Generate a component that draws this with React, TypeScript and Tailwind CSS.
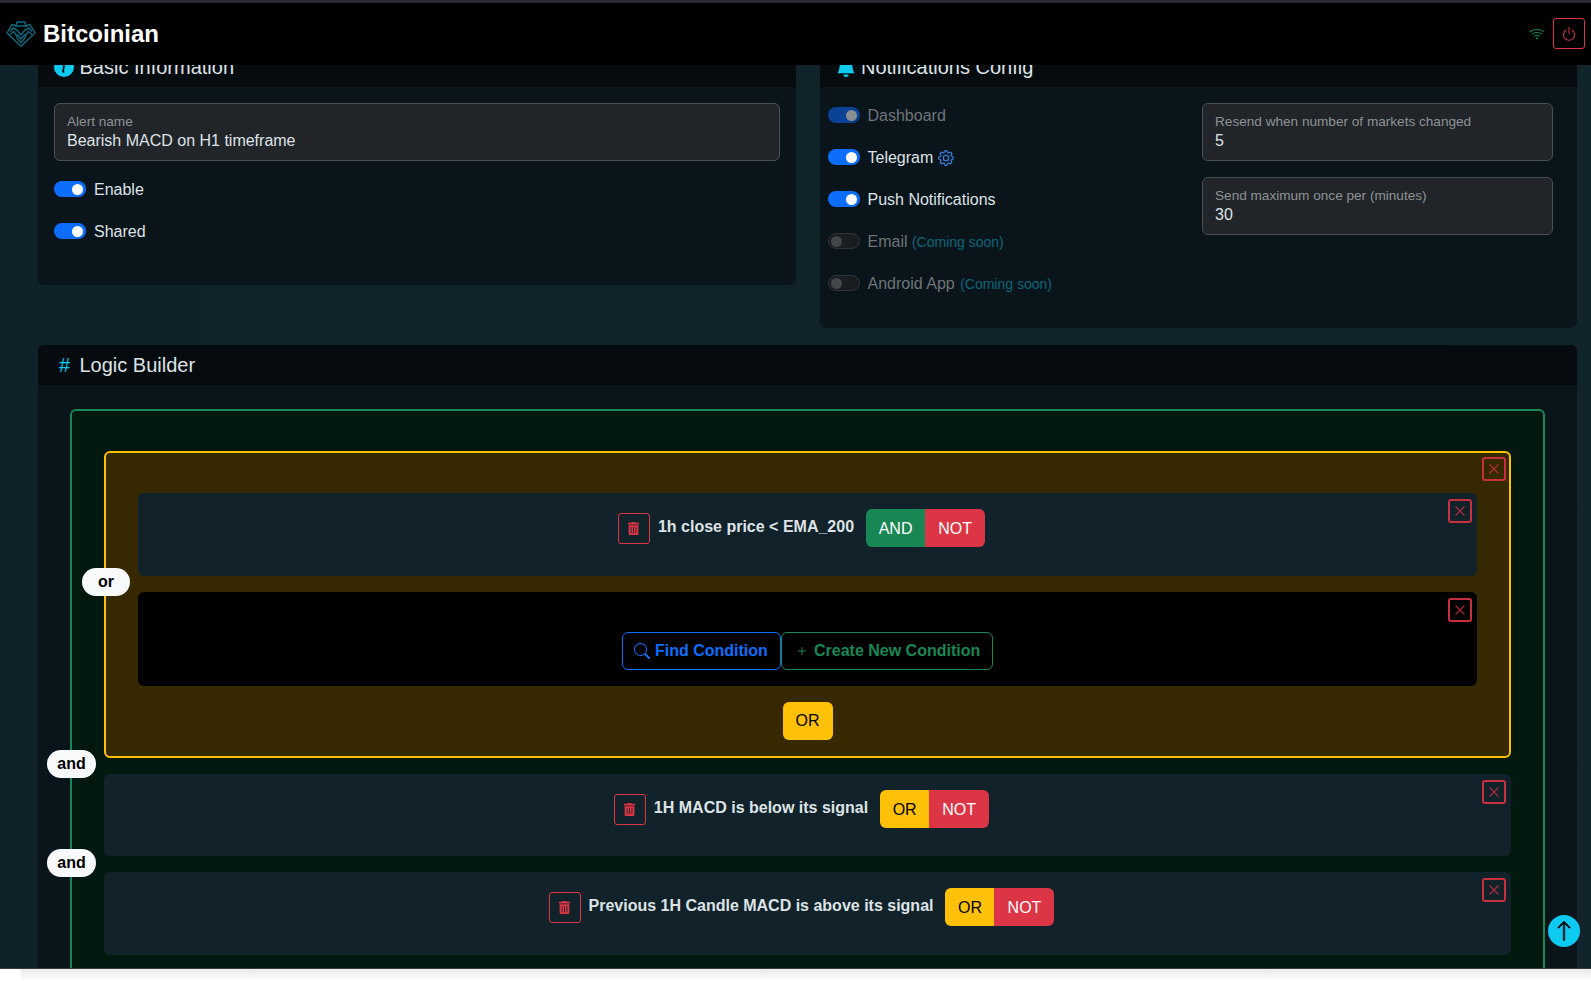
import type { ReactNode } from 'react'
import { BsArrowUp, BsBellFill, BsGear, BsInfoCircleFill, BsPlus, BsPower, BsSearch, BsWifi, BsXLg } from 'react-icons/bs'
import { FaTrashAlt } from 'react-icons/fa'

function Logo() {
    return (
        <svg width="30" height="26" viewBox="0 0 30 26" fill="none" stroke="#0c6c82" strokeWidth="1.4" strokeLinejoin="round" strokeLinecap="round">
            <path d="M6 3.5 L1 12 L15 25.3 L29 12 L24 3.5 L20 5 L19 1 H11 L10 5 Z" />
            <path d="M10 5 H20" />
            <path d="M4.5 10 L7 7 L11 9 L15 14 L19 9 L23 7 L25.5 10" />
            <path d="M4.5 13 L8 10.5 L12.5 19 L15 21.5 L17.5 19 L22 10.5 L25.5 13" />
            <path d="M11 13.5 L15 18 L19 13.5" />
        </svg>
    )
}

function Switch({ dim = false, off = false }: { dim?: boolean; off?: boolean }) {
    if (off) {
        return (
            <span className="-mt-px flex h-4 w-8 shrink-0 items-center rounded-full border border-[#2f353a] bg-[#191d21] pl-[2px]">
                <span className="h-[11px] w-[11px] rounded-full bg-[#43474b]" />
            </span>
        )
    }
    return (
        <span className={`-mt-px flex h-4 w-8 shrink-0 items-center justify-end rounded-full pr-[3px] ${dim ? 'bg-[#0a4295]' : 'bg-[#0d6efd]'}`}>
            <span className={`h-[11px] w-[11px] rounded-full ${dim ? 'bg-[#8a8f94]' : 'bg-white'}`} />
        </span>
    )
}

function SwitchRow({ children, ...rest }: { children: ReactNode; dim?: boolean; off?: boolean }) {
    return (
        <div className="flex h-6 items-center gap-2 pt-px">
            <Switch {...rest} />
            {children}
        </div>
    )
}

function Field({ label, value }: { label: string; value: string }) {
    return (
        <div className="h-[58px] rounded-md border border-[#495057] bg-[#212529] px-3 pt-[9px]">
            <div className="text-[13.6px] leading-[18px] text-[#8d9296]">{label}</div>
            <div className="text-base leading-5 text-[#dee2e6]">{value}</div>
        </div>
    )
}

function CardHead({ icon, title }: { icon: ReactNode; title: string }) {
    return (
        <div className="flex h-10 items-center rounded-t-md bg-[#050b0e] pl-4 text-xl text-[#dee2e6]">
            <span className="flex w-[25.5px] items-center text-[#0dcaf0]">{icon}</span>
            {title}
        </div>
    )
}

function CloseBtn({ className }: { className: string }) {
    return (
        <span className={`absolute flex h-6 w-6 items-center justify-center rounded-[3px] border-2 border-[#c9303f] text-[#c9303f] ${className}`}>
            <BsXLg size={12} strokeWidth={0.5} />
        </span>
    )
}

function Pill({ label, className }: { label: string; className: string }) {
    return (
        <span className={`absolute flex h-7 items-center justify-center rounded-full bg-[#f8f9fa] text-base font-bold text-black ${className}`}>
            {label}
        </span>
    )
}

function ConditionRow({ text, first, className, close }: { text: string; first: 'AND' | 'OR'; className: string; close: string }) {
    return (
        <div className={`relative flex items-start justify-center rounded-md bg-[#11222a] pr-3 pt-4 ${className}`}>
            <CloseBtn className={close} />
            <span className="mt-1 flex h-[31px] w-8 items-center justify-center rounded-[3px] border border-[#dc3545] pb-px text-[#dc3545]">
                <FaTrashAlt size={13} />
            </span>
            <span className="ml-2 mt-2 text-base font-bold leading-5 text-[#dee2e6]">{text}</span>
            <div className="ml-3 flex h-[38px] overflow-hidden rounded-md text-base">
                {first === 'AND' ? (
                    <span className="flex w-[59px] items-center justify-center bg-[#198754] pt-px text-white">AND</span>
                ) : (
                    <span className="flex w-[49px] items-center justify-center bg-[#ffc107] pt-px text-black">OR</span>
                )}
                <span className="flex w-[60px] items-center justify-center bg-[#dc3545] pt-px text-white">NOT</span>
            </div>
        </div>
    )
}

export default function App() {
    return (
        <div className="h-[981px] overflow-hidden bg-white font-['Liberation_Sans',Arial,sans-serif]">
            <div className="relative h-[969px] overflow-hidden border-b border-[#3a3a3a] bg-[linear-gradient(90deg,#0f2229,#11232b)]">
                <header className="absolute inset-x-0 top-0 z-10 flex h-[65px] items-center border-t-[3px] border-[#2a2b30] bg-black pb-[1px] pl-[6px] pr-[6px]">
                    <Logo />
                    <span className="ml-[7px] text-2xl font-bold text-white">Bitcoinian</span>
                    <BsWifi size={16} className="ml-auto text-[#198754]" />
                    <span className="ml-2 flex h-[31px] w-8 items-center justify-center rounded-[3px] border border-[#dc3545] text-[#dc3545]">
                        <BsPower size={16} />
                    </span>
                </header>

                <main className="pl-[38px] pr-[14px] pt-[47px]">
                    <div className="grid grid-cols-2 items-start gap-6">
                        <section className="rounded-md bg-[#09151b]">
                            <CardHead icon={<BsInfoCircleFill size={20} />} title="Basic Information" />
                            <div className="p-4 pb-[42px] text-base text-[#dee2e6]">
                                <Field label="Alert name" value="Bearish MACD on H1 timeframe" />
                                <div className="mt-4 flex flex-col gap-[18px]">
                                    <SwitchRow>Enable</SwitchRow>
                                    <SwitchRow>Shared</SwitchRow>
                                </div>
                            </div>
                        </section>

                        <section className="rounded-md bg-[#09151b]">
                            <CardHead icon={<BsBellFill size={20} />} title="Notifications Config" />
                            <div className="flex pb-[33px] pl-2 pr-6 pt-4 text-base text-[#dee2e6]">
                                <div className="flex flex-1 flex-col gap-[18px]">
                                    <SwitchRow dim><span className="text-[#6f7478]">Dashboard</span></SwitchRow>
                                    <SwitchRow>
                                        Telegram
                                        <BsGear size={16} strokeWidth={0.3} className="ml-[-3px] text-[#3d7fdc]" />
                                    </SwitchRow>
                                    <SwitchRow>Push Notifications</SwitchRow>
                                    <SwitchRow off>
                                        <span className="text-[#6f7478]">Email <span className="text-sm text-[#0c6679]">(Coming soon)</span></span>
                                    </SwitchRow>
                                    <SwitchRow off>
                                        <span className="text-[#6f7478]">Android App <span className="ml-px text-sm text-[#0c6679]">(Coming soon)</span></span>
                                    </SwitchRow>
                                </div>
                                <div className="flex w-[351px] flex-col gap-4">
                                    <Field label="Resend when number of markets changed" value="5" />
                                    <Field label="Send maximum once per (minutes)" value="30" />
                                </div>
                            </div>
                        </section>
                    </div>

                    <section className="mt-[17px] rounded-md bg-[#09151b]">
                        <CardHead icon={<span className="pl-[5px] text-xl">#</span>} title="Logic Builder" />
                        <div className="px-8 pt-6">
                            <div className="rounded-t-md border-2 border-b-0 border-[#198754] bg-[#03180f] px-8 pb-8 pt-10">
                                <div className="relative rounded-md border-2 border-[#ffc107] bg-[#362800] px-8 pb-4 pt-10">
                                    <CloseBtn className="right-[3px] top-[4px]" />
                                    <ConditionRow text="1h close price < EMA_200" first="AND" className="h-[83px]" close="right-[5px] top-[6px]" />
                                    <div className="relative mt-4 flex h-[94px] items-start justify-center rounded-md bg-black pt-10">
                                        <CloseBtn className="right-[5px] top-[6px]" />
                                        <Pill label="or" className="-top-6 left-[-56px] w-12" />
                                        <span className="flex h-[38px] w-[159px] items-center gap-[5px] rounded-md border border-[#0d6efd] pl-[11px] text-base font-bold text-[#0d6efd]">
                                            <BsSearch size={16} />
                                            Find Condition
                                        </span>
                                        <span className="flex h-[38px] w-[212px] items-center gap-1 rounded-md border border-[#198754] pl-3 text-base font-bold text-[#198754]">
                                            <BsPlus size={16} />
                                            Create New Condition
                                        </span>
                                    </div>
                                    <div className="mt-4 flex justify-center">
                                        <span className="flex h-[38px] w-[50px] items-center justify-center rounded-md bg-[#ffc107] text-base text-black">OR</span>
                                    </div>
                                </div>
                                <div className="relative mt-4">
                                    <Pill label="and" className="-top-6 left-[-57px] w-[49px]" />
                                    <ConditionRow text="1H MACD is below its signal" first="OR" className="h-[82px]" close="right-[5px] top-[6px]" />
                                </div>
                                <div className="relative mt-4">
                                    <Pill label="and" className="-top-[23px] left-[-57px] w-[49px]" />
                                    <ConditionRow text="Previous 1H Candle MACD is above its signal" first="OR" className="h-[83px]" close="right-[5px] top-[6px]" />
                                </div>
                            </div>
                        </div>
                    </section>
                </main>

                <span className="absolute left-[1548px] top-[915px] z-10 flex h-8 w-8 items-center justify-center rounded-full bg-[#0dcaf0] text-[#0a161c]">
                    <BsArrowUp size={22} strokeWidth={0.6} />
                </span>
            </div>
            <div className="ml-[21px] h-3 bg-[linear-gradient(180deg,#e9e9e9,#ffffff)]" />
        </div>
    )
}
